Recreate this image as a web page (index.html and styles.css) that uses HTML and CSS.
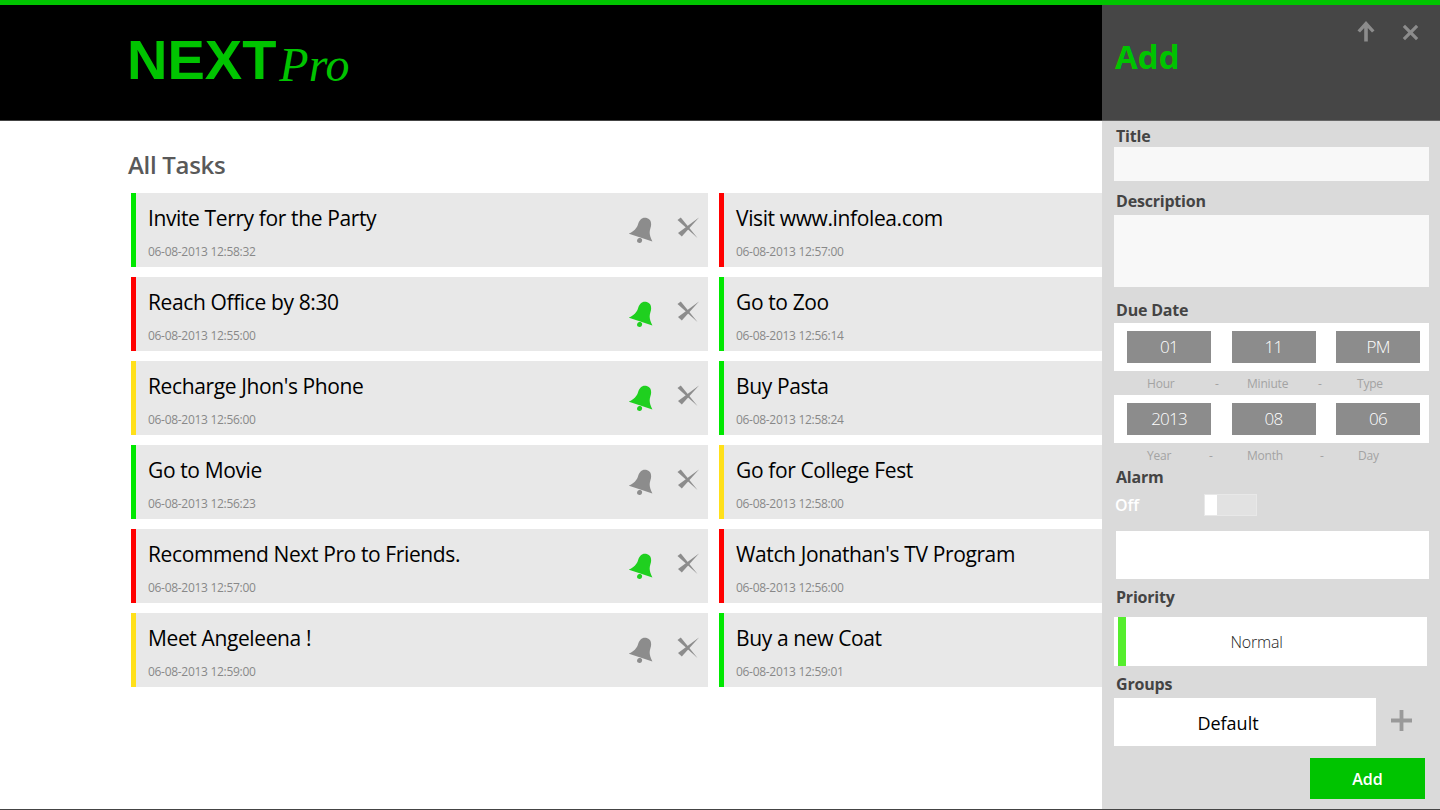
FILE: index.html
```html
<!DOCTYPE html>
<html>
<head>
  <title>Next Pro</title>
  <link rel="stylesheet" href="styles.css">
</head>
<body>
  <svg class="defs" width="0" height="0">
    <symbol id="bell" viewBox="0 0 28 28">
      <g transform="rotate(18 14 14)">
        <path d="M14 1.500C9.500 1.500 7.500 5 7.500 10C7.500 15 5.500 18 1.500 22L26.500 22C22.500 18 20.500 15 20.500 10C20.500 5 18.500 1.500 14 1.500Z"/>
        <circle cx="14" cy="25" r="2.500"/>
      </g>
    </symbol>
    <symbol id="cross" viewBox="0 0 22 22">
      <path d="M0.500 3L3.800 0.500L20.500 21Z"/>
      <path d="M22 0.500L4.800 19.500L1 16Z"/>
    </symbol>
  </svg>

  <div class="topbar"></div>
  <div class="app">
    <div class="left">
      <header class="brand">
        <span class="logo-next">NEXT</span>
        <span class="logo-pro">Pro</span>
      </header>
      <main class="tasks">
        <h2 class="tasks-title">All Tasks</h2>
        <div class="task-grid">

          <div class="task green">
            <div class="task-text"><div class="task-name">Invite Terry for the Party</div><div class="task-date">06-08-2013 12:58:32</div></div>
            <svg class="bell"><use href="#bell"/></svg>
            <svg class="cross"><use href="#cross"/></svg>
          </div>
          <div class="task red">
            <div class="task-text"><div class="task-name">Visit www.infolea.com</div><div class="task-date">06-08-2013 12:57:00</div></div>
          </div>

          <div class="task red">
            <div class="task-text"><div class="task-name">Reach Office by 8:30</div><div class="task-date">06-08-2013 12:55:00</div></div>
            <svg class="bell on"><use href="#bell"/></svg>
            <svg class="cross"><use href="#cross"/></svg>
          </div>
          <div class="task green">
            <div class="task-text"><div class="task-name">Go to Zoo</div><div class="task-date">06-08-2013 12:56:14</div></div>
          </div>

          <div class="task yellow">
            <div class="task-text"><div class="task-name">Recharge Jhon's Phone</div><div class="task-date">06-08-2013 12:56:00</div></div>
            <svg class="bell on"><use href="#bell"/></svg>
            <svg class="cross"><use href="#cross"/></svg>
          </div>
          <div class="task green">
            <div class="task-text"><div class="task-name">Buy Pasta</div><div class="task-date">06-08-2013 12:58:24</div></div>
          </div>

          <div class="task green">
            <div class="task-text"><div class="task-name">Go to Movie</div><div class="task-date">06-08-2013 12:56:23</div></div>
            <svg class="bell"><use href="#bell"/></svg>
            <svg class="cross"><use href="#cross"/></svg>
          </div>
          <div class="task yellow">
            <div class="task-text"><div class="task-name">Go for College Fest</div><div class="task-date">06-08-2013 12:58:00</div></div>
          </div>

          <div class="task red">
            <div class="task-text"><div class="task-name">Recommend Next Pro to Friends.</div><div class="task-date">06-08-2013 12:57:00</div></div>
            <svg class="bell on"><use href="#bell"/></svg>
            <svg class="cross"><use href="#cross"/></svg>
          </div>
          <div class="task red">
            <div class="task-text"><div class="task-name">Watch Jonathan's TV Program</div><div class="task-date">06-08-2013 12:56:00</div></div>
          </div>

          <div class="task yellow">
            <div class="task-text"><div class="task-name">Meet Angeleena !</div><div class="task-date">06-08-2013 12:59:00</div></div>
            <svg class="bell"><use href="#bell"/></svg>
            <svg class="cross"><use href="#cross"/></svg>
          </div>
          <div class="task green">
            <div class="task-text"><div class="task-name">Buy a new Coat</div><div class="task-date">06-08-2013 12:59:01</div></div>
          </div>

        </div>
      </main>
    </div>

    <aside class="panel">
      <div class="panel-head">
        <h1 class="panel-title">Add</h1>
        <div class="panel-actions">
          <svg class="head-icon" viewBox="0 0 20 22"><path d="M10 1L18.500 10.500L16 12.500L11.800 8V21.500H8.200V8L4 12.500L1.500 10.500Z"/></svg>
          <svg class="head-icon close" viewBox="0 0 18 18"><path d="M3.200 0.800L9 6.600L14.800 0.800L17.200 3.200L11.400 9L17.200 14.800L14.800 17.200L9 11.400L3.200 17.200L0.800 14.800L6.600 9L0.800 3.200Z"/></svg>
        </div>
      </div>

      <div class="form">
        <div class="label first">Title</div>
        <div class="field title-field"></div>
        <div class="label desc-label">Description</div>
        <div class="field desc-field"></div>

        <div class="label due-label">Due Date</div>
        <div class="picker">
          <div class="cell">01</div><div class="cell">11</div><div class="cell">PM</div>
        </div>
        <div class="captions">
          <span class="cap-hour">Hour</span><span class="cap-dash1">-</span><span class="cap-minute">Miniute</span><span class="cap-dash2">-</span><span>Type</span>
        </div>
        <div class="picker">
          <div class="cell">2013</div><div class="cell">08</div><div class="cell">06</div>
        </div>
        <div class="captions">
          <span class="cap-year">Year</span><span class="cap-dash3">-</span><span class="cap-month">Month</span><span class="cap-dash3">-</span><span>Day</span>
        </div>

        <div class="label alarm-label">Alarm</div>
        <div class="alarm-row">
          <span class="off">Off</span>
          <div class="toggle"><div class="knob"></div></div>
        </div>
        <div class="alarm-field"></div>

        <div class="label prio-label">Priority</div>
        <div class="priority"><div class="prio-mark"></div><div class="prio-text">Normal</div></div>

        <div class="label group-label">Groups</div>
        <div class="group-row">
          <div class="group-box">Default</div>
          <svg class="plus" viewBox="0 0 22 22"><path d="M9 0H13V9H22V13H13V22H9V13H0V9H9Z"/></svg>
        </div>
        <div class="submit-row"><button class="add-btn">Add</button></div>
      </div>
    </aside>
  </div>
</body>
</html>
```

FILE: styles.css
```css
/* page */
body {
  margin: 0;
  width: 1440px;
  height: 810px;
  overflow: hidden;
  background: #fff;
  font-family: "Open Sans", "Noto Sans", sans-serif;
}
.defs {
  display: block;
  height: 0;
}
.topbar {
  height: 5px;
  background: #00c400;
}
.app {
  display: flex;
  height: 804px;
  border-bottom: 1px solid #444;
}

/* left side */
.left {
  width: 1102px;
  overflow: hidden;
}
.brand {
  display: flex;
  align-items: flex-end;
  height: 116px;
  box-sizing: border-box;
  padding: 0 0 35px 127px;
  background: #000;
  border-bottom: 1px solid #444;
  color: #00c400;
}
.logo-next {
  font: bold 56px/50px "Liberation Sans", sans-serif;
}
.logo-pro {
  margin: 0 0 -1px 3px;
  font: italic 48px/42px "Liberation Serif", serif;
}
.tasks {
  padding: 27px 0 0 131px;
}
.tasks-title {
  margin: 0 0 11px -3px;
  font-size: 24px;
  line-height: 34px;
  font-weight: 600;
  letter-spacing: -0.3px;
  color: #595959;
}
.task-grid {
  display: grid;
  grid-template-columns: 577px 577px;
  grid-auto-rows: 74px;
  column-gap: 11px;
  row-gap: 10px;
}
.task {
  display: flex;
  align-items: center;
  background: #e8e8e8;
  border-left: 5px solid #00e800;
  padding-left: 12px;
}
.task.red { border-left-color: #ff0000; }
.task.green { border-left-color: #00e800; }
.task.yellow { border-left-color: #ffe01a; }
.task-text {
  flex: 1;
  padding-top: 3px;
}
.task-name {
  font-size: 21px;
  line-height: 28px;
  letter-spacing: -0.38px;
  color: #000;
  margin-bottom: 12px;
}
.task-date {
  font-size: 12px;
  line-height: 16px;
  letter-spacing: -0.3px;
  color: #888;
}
.bell {
  width: 28px;
  height: 28px;
  fill: #8c8c8c;
  margin-right: 20px;
}
.bell.on {
  fill: #1fd01f;
}
.cross {
  width: 22px;
  height: 22px;
  fill: #8c8c8c;
  margin: -4px 9px 0 0;
}

/* add panel */
.panel {
  width: 338px;
  background: #dadada;
}
.panel-head {
  display: flex;
  justify-content: space-between;
  height: 116px;
  box-sizing: border-box;
  background: #464646;
  border-bottom: 1px solid #666;
}
.panel-title {
  margin: 29px 0 0 13px;
  font-size: 33px;
  line-height: 46px;
  font-weight: 700;
  color: #00c400;
}
.panel-actions {
  display: flex;
  align-items: flex-start;
  padding: 15px 21px 0 0;
}
.head-icon {
  width: 20px;
  height: 22px;
  fill: #8c8c8c;
}
.head-icon.close {
  width: 17px;
  height: 17px;
  margin: 4px 0 0 26px;
}
.form {
  padding: 0 12px;
}
.label {
  margin-left: 2px;
  font-size: 16px;
  line-height: 20px;
  font-weight: 700;
  letter-spacing: -0.2px;
  color: #444;
}
.label.first { padding-top: 5px; }
.field {
  width: 315px;
  background: #f8f8f8;
}
.title-field {
  height: 34px;
  margin-top: 1px;
}
.desc-label { margin-top: 10px; }
.desc-field {
  height: 72px;
  margin-top: 4px;
}
.due-label { margin-top: 13px; }
.picker {
  display: flex;
  width: 315px;
  height: 48px;
  box-sizing: border-box;
  padding: 8px 9px 8px 13px;
  margin-top: 3px;
  justify-content: space-between;
  background: #fff;
}
.cell {
  width: 84px;
  height: 32px;
  background: #8c8c8c;
  color: #fff;
  font-size: 17px;
  font-weight: 300;
  letter-spacing: -0.8px;
  line-height: 32px;
  text-align: center;
}
.captions {
  display: flex;
  height: 24px;
  margin-bottom: -3px;
  font-size: 12px;
  line-height: 26px;
  letter-spacing: -0.2px;
  color: #a3a3a3;
}
.cap-hour { margin-left: 33px; width: 68px; }
.cap-dash1 { width: 32px; }
.cap-minute { width: 71px; }
.cap-dash2 { width: 39px; }
.cap-year { margin-left: 33px; width: 62px; }
.cap-dash3 { width: 38px; }
.cap-month { width: 73px; }
.alarm-label { margin-top: 3px; }
.alarm-row {
  display: flex;
  align-items: center;
  height: 24px;
  margin-top: 6px;
}
.off {
  width: 89px;
  margin-left: 1px;
  font-size: 16px;
  font-weight: 600;
  color: #fff;
}
.toggle {
  width: 53px;
  height: 22px;
  box-sizing: border-box;
  border: 1px solid #e8e8e8;
  background: #e2e2e2;
}
.knob {
  width: 12px;
  height: 20px;
  background: #fff;
}
.alarm-field {
  width: 313px;
  height: 48px;
  margin: 14px 0 0 2px;
  background: #fff;
}
.prio-label { margin-top: 8px; }
.priority {
  display: flex;
  width: 313px;
  height: 49px;
  margin-top: 10px;
  padding-left: 4px;
  box-sizing: border-box;
  background: #fff;
}
.prio-mark {
  width: 8px;
  background: #55ee2d;
}
.prio-text {
  flex: 1;
  padding-right: 40px;
  text-align: center;
  font-size: 16px;
  font-weight: 300;
  letter-spacing: -0.2px;
  line-height: 50px;
  color: #222;
}
.group-label { margin-top: 8px; }
.group-row {
  display: flex;
  align-items: center;
  margin-top: 4px;
}
.group-box {
  width: 262px;
  height: 48px;
  box-sizing: border-box;
  padding-right: 34px;
  background: #fff;
  color: #000;
  font-size: 18px;
  line-height: 50px;
  text-align: center;
}
.plus {
  width: 21px;
  height: 21px;
  margin: -4px 0 0 15px;
  fill: #999;
}
.submit-row {
  display: flex;
  justify-content: flex-end;
  padding-right: 3px;
  margin-top: 12px;
}
.add-btn {
  width: 115px;
  height: 41px;
  border: none;
  background: #00c400;
  color: #fff;
  font-family: inherit;
  font-size: 16px;
  font-weight: 600;
}
```
